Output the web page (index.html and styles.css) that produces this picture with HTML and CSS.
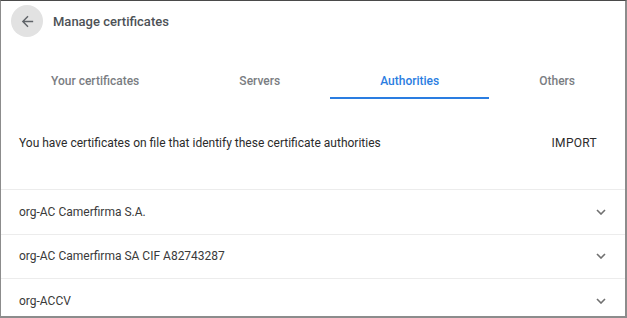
FILE: index.html
```html
<!DOCTYPE html>
<html lang="en">
<head>
    <meta charset="UTF-8">
    <title>Manage certificates</title>
    <link rel="stylesheet" href="styles.css">
</head>
<body>
    <div class="window">
        <div class="header">
            <button class="back-button" aria-label="Back">
                <svg width="17" height="17" viewBox="0 0 24 24"><path d="M20 11H7.83l5.59-5.59L12 4l-8 8 8 8 1.41-1.41L7.83 13H20v-2z" fill="#5f6368"/></svg>
            </button>
            <h1 class="title">Manage certificates</h1>
        </div>

        <div class="tabs">
            <div class="tab">Your certificates</div>
            <div class="tab">Servers</div>
            <div class="tab active">Authorities</div>
            <div class="tab">Others</div>
        </div>

        <div class="intro">
            <span>You have certificates on file that identify these certificate authorities</span>
            <button class="import-button">IMPORT</button>
        </div>

        <div class="cert-list">
            <div class="cert-row">
                <span>org-AC Camerfirma S.A.</span>
                <svg class="chevron" width="10" height="6" viewBox="0 0 10 6"><path d="M1 1l4 4 4-4" fill="none" stroke="#707070" stroke-width="1.6"/></svg>
            </div>
            <div class="cert-row">
                <span>org-AC Camerfirma SA CIF A82743287</span>
                <svg class="chevron" width="10" height="6" viewBox="0 0 10 6"><path d="M1 1l4 4 4-4" fill="none" stroke="#707070" stroke-width="1.6"/></svg>
            </div>
            <div class="cert-row">
                <span>org-ACCV</span>
                <svg class="chevron" width="10" height="6" viewBox="0 0 10 6"><path d="M1 1l4 4 4-4" fill="none" stroke="#707070" stroke-width="1.6"/></svg>
            </div>
        </div>
    </div>
</body>
</html>
```

FILE: styles.css
```css
* { margin: 0; padding: 0; box-sizing: border-box; }
body { font-family: Roboto, 'Liberation Sans', Arial, sans-serif; background: #fff; }
.window { width: 627px; height: 318px; border: 1px solid #8c8c8c; border-top-color: #4a4a4a; border-right-width: 2px; border-bottom-width: 2px; overflow: hidden; background: #fff; }

.header { display: flex; align-items: center; height: 40px; padding-left: 10px; }
.back-button { width: 32px; height: 32px; border-radius: 50%; border: none; background: #e2e2e2; display: flex; align-items: center; justify-content: center; }
.title { margin-left: 10px; font-size: 13px; font-weight: 500; color: #4d5156; }

.tabs { display: flex; margin-top: 21px; height: 37px; }
.tab { flex: 1 1 auto; display: flex; align-items: center; justify-content: center; font-size: 12px; font-weight: 500; color: #7a7d82; border-bottom: 2px solid transparent; padding-top: 2px; }
.tab.active { color: #2a7de1; border-bottom-color: #2a7de1; }

.intro { display: flex; justify-content: space-between; align-items: center; height: 90px; padding: 0 28px 2px 18px; font-size: 12px; color: #2b2b2b; }
.import-button { border: none; background: none; font-family: inherit; font-size: 12px; font-weight: 400; letter-spacing: 0.3px; color: #2b2b2b; }

.cert-row { display: flex; justify-content: space-between; align-items: center; height: 44.5px; padding: 0 19px 0 18px; border-top: 1px solid #ececec; font-size: 12px; color: #3a3a3a; }
.chevron { display: block; }
```
